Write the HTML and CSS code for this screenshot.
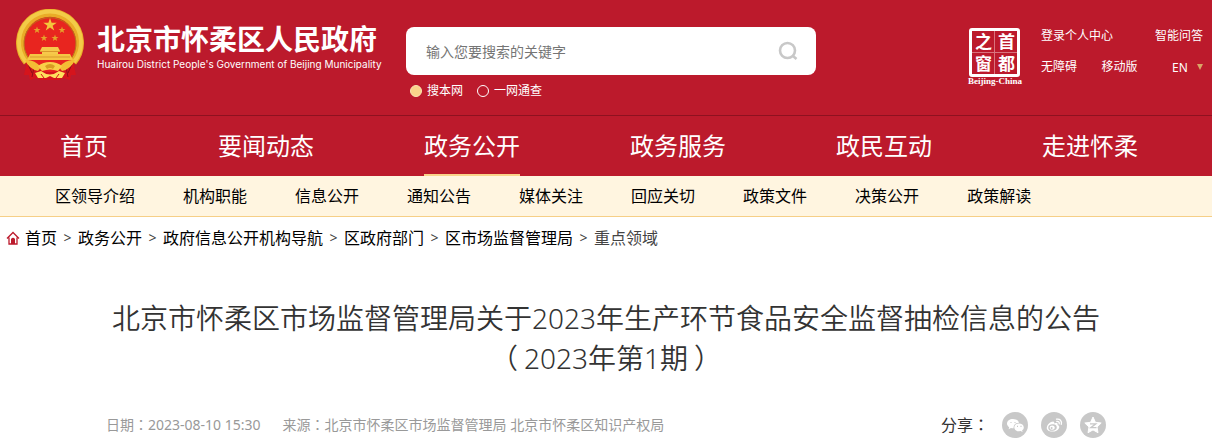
FILE: index.html
```html
<!DOCTYPE html>
<html lang="zh-CN">
<head>
    <meta charset="UTF-8">
    <meta name="viewport" content="width=device-width, initial-scale=1.0">
    <title>北京市怀柔区人民政府</title>
    <link rel="stylesheet" href="styles.css">
</head>
<body>
    <header class="header">
        <a class="logo" href="#">
            <svg class="emblem" viewBox="0 0 68 72" aria-hidden="true">
                <path d="M9 47 L10 57 L8 66 L13 66 L14 71 L21 69 L25 71 L43 71 L47 69 L54 71 L55 66 L60 66 L58 57 L59 47 Z" fill="#d5141c"/>
                <path d="M12 55 L16 64 M18 58 L16 68 M56 55 L52 64 M50 58 L52 68" stroke="#8f0e18" stroke-width="1" fill="none"/>
                <circle cx="34" cy="34" r="29" fill="#e8251f"/>
                <path d="M11 53 A30 30 0 1 1 57 53" fill="none" stroke="#e9ac27" stroke-width="8"/>
                <path d="M10 53 A31 31 0 1 1 58 53" fill="none" stroke="#f3cb48" stroke-width="4"/>
                <path d="M13 50 A26 26 0 1 1 55 50" fill="none" stroke="#b9731a" stroke-width="1"/>
                <path d="M34 9 L35.600 13.800 H40.700 L36.600 16.800 L38.200 21.600 L34 18.600 L29.800 21.600 L31.400 16.800 L27.300 13.800 H32.400 Z" fill="#f3c63c"/>
                <path id="star" d="M21 17.500 L21.900 20 H24.500 L22.400 21.500 L23.200 24 L21 22.500 L18.800 24 L19.600 21.500 L17.500 20 H20.100 Z" fill="#e5a12b"/>
                <use href="#star" x="25"/>
                <use href="#star" x="7" y="8"/>
                <use href="#star" x="18" y="8"/>
                <path d="M26 38 H42 L44 42 H24 Z M26 42 H42 V45 H26 Z" fill="#f6c94b"/>
                <path d="M14 45 H54 L57 51 H11 Z" fill="#f5c644"/>
                <path d="M24 42.500 H44 M14 48 H54" stroke="#d9992c" stroke-width="1"/>
                <path d="M9 51 Q18 50 25 58 L22 62 Q13 60 9 51 Z M59 51 Q50 50 43 58 L46 62 Q55 60 59 51 Z" fill="#f4bd35"/>
                <path d="M22 57 Q27 53 34 53 Q41 53 46 57 L42 62 Q34 59 26 62 Z" fill="#f8cf48"/>
                <path d="M29 57 Q34 53 39 57 L37 60 Q34 58 31 60 Z" fill="#d89b22"/>
                <path d="M19 64 L25 62 Q34 69 43 62 L49 64 L46 69 H38 L34 67 L30 69 H22 Z" fill="#ffe05d"/>
                <path d="M25 65 L28 69 M43 65 L40 69" stroke="#d5141c" stroke-width="1"/>
            </svg>
            <span class="site">
                <span class="name">北京市怀柔区人民政府</span>
                <span class="name-en">Huairou District People's Government of Beijing Municipality</span>
            </span>
        </a>
        <form class="search">
            <div class="search-box">
                <input type="text" placeholder="输入您要搜索的关键字" aria-label="搜索">
                <button type="button" aria-label="搜索">
                    <svg viewBox="0 0 20 20" width="20" height="20" fill="none" stroke="#c8c8c8" stroke-width="2.600">
                        <circle cx="9.500" cy="9.500" r="7.500"/>
                        <path d="M15 15 L18.500 18"/>
                    </svg>
                </button>
            </div>
            <div class="scope">
                <label><input type="radio" name="scope" checked>搜本网</label>
                <label><input type="radio" name="scope">一网通查</label>
            </div>
        </form>
        <div class="tools">
            <a class="capital" href="#">
                <span class="seal"><i>之</i><i>首</i><i>窗</i><i>都</i></span>
                <span class="seal-name">Beijing-China</span>
            </a>
            <div class="links">
                <div class="links-row">
                    <a href="#">登录个人中心</a>
                    <a href="#">智能问答</a>
                </div>
                <div class="links-row">
                    <a href="#">无障碍</a>
                    <a href="#">移动版</a>
                    <span class="lang">
                        <select aria-label="Language"><option>EN</option></select>
                        <svg viewBox="0 0 6 6" width="6" height="6" aria-hidden="true"><path d="M0 0 H6 L3 6 Z" fill="#d9a566"/></svg>
                    </span>
                </div>
            </div>
        </div>
    </header>

    <nav class="nav">
        <a href="#">首页</a>
        <a href="#">要闻动态</a>
        <a class="active" href="#">政务公开</a>
        <a href="#">政务服务</a>
        <a href="#">政民互动</a>
        <a href="#">走进怀柔</a>
    </nav>
    <nav class="subnav">
        <a href="#">区领导介绍</a>
        <a href="#">机构职能</a>
        <a href="#">信息公开</a>
        <a href="#">通知公告</a>
        <a href="#">媒体关注</a>
        <a href="#">回应关切</a>
        <a href="#">政策文件</a>
        <a href="#">决策公开</a>
        <a href="#">政策解读</a>
    </nav>

    <div class="crumbs">
        <svg viewBox="0 0 14 14" width="14" height="14" aria-hidden="true">
            <path d="M1 7.500 L7 1.500 L13 7.500 M3 6.500 V13 H11 V6.500" fill="none" stroke="#bc1a2c" stroke-width="1.300"/>
            <path d="M5 13 V8 Q7 5.500 9 8 V13 Z" fill="#bc1a2c"/>
        </svg>
        <a href="#">首页</a><span>&gt;</span>
        <a href="#">政务公开</a><span>&gt;</span>
        <a href="#">政府信息公开机构导航</a><span>&gt;</span>
        <a href="#">区政府部门</a><span>&gt;</span>
        <a href="#">区市场监督管理局</a><span>&gt;</span>
        <a class="current" href="#">重点领域</a>
    </div>

    <main class="article">
        <h1>北京市怀柔区市场监督管理局关于2023年生产环节食品安全监督抽检信息的公告<br>（<span class="issue">2023年第1期</span>）</h1>
        <div class="meta">
            <span>日期<b class="colon" lang="zh-TW">：</b>2023-08-10 15:30</span>
            <span>来源<b class="colon" lang="zh-TW">：</b>北京市怀柔区市场监督管理局 北京市怀柔区知识产权局</span>
            <div class="share">
                <span>分享<b class="colon" lang="zh-TW">：</b></span>
                <a href="#" aria-label="微信">
                    <svg viewBox="0 0 26 26" width="26" height="26">
                        <circle cx="13" cy="13" r="13" fill="#c8c8c8"/>
                        <path d="M11 7 C7.500 7 5 9 5 11.600 C5 13.200 5.900 14.400 7.200 15.200 L6.600 17.200 L9 16 C9.900 16.300 11 16.300 11.600 16.200 C11.200 13 14 10.700 17 10.700 C16.500 8.500 14 7 11 7 Z" fill="#fff"/>
                        <path d="M17 11.500 C14.300 11.500 12.300 13.300 12.300 15.400 C12.300 17.600 14.400 19.300 17 19.300 L18.700 19 L20.600 20 L20.100 18.300 C21.200 17.600 21.800 16.600 21.800 15.400 C21.800 13.200 19.600 11.500 17 11.500 Z" fill="#fff"/>
                        <path d="M8.500 10.500 h1 M12.500 10.500 h1 M15 14.300 h1 M18.500 14.300 h1" stroke="#c8c8c8" stroke-width="1.200"/>
                    </svg>
                </a>
                <a href="#" aria-label="微博">
                    <svg viewBox="0 0 26 26" width="26" height="26">
                        <circle cx="13" cy="13" r="13" fill="#c8c8c8"/>
                        <path d="M10 10 C12.200 8.800 13.800 9.400 13.200 11.400 C15.500 10.600 17.300 11.200 16.600 13 C18.200 13.500 18.700 14.700 18 16.200 C16.800 18.600 14 19.800 11 19.600 C7.800 19.400 5.500 17.900 5.800 15.400 C6 13.300 8 11.200 10 10 Z" fill="#fff"/>
                        <ellipse cx="11.500" cy="15.500" rx="4.300" ry="3.200" transform="rotate(-10 11.500 15.500)" fill="#c8c8c8"/>
                        <ellipse cx="11.200" cy="15.700" rx="2.600" ry="2.100" fill="#fff"/>
                        <circle cx="10.600" cy="16" r="1" fill="#c8c8c8"/>
                        <path d="M15.500 7.200 C18.800 6.400 21.200 9 20.300 12.300 M15.800 9.500 C17.600 9.200 18.600 10.300 18.200 11.800" fill="none" stroke="#fff" stroke-width="1.300" stroke-linecap="round"/>
                    </svg>
                </a>
                <a href="#" aria-label="QQ空间">
                    <svg viewBox="0 0 26 26" width="26" height="26">
                        <circle cx="13" cy="13" r="13" fill="#c8c8c8"/>
                        <path d="M13 5 L15.400 10.300 L21.200 11 L17 15 L18 20.700 L13 17.900 L8 20.700 L9 15 L4.800 11 L10.600 10.300 Z" fill="#fff" stroke="#fff" stroke-linejoin="round"/>
                        <path d="M10 11.800 H15.800 L10.800 15.700 H16.500" fill="none" stroke="#c8c8c8" stroke-width="1.300"/>
                    </svg>
                </a>
            </div>
        </div>
    </main>
</body>
</html>
```
FILE: styles.css
```css
body{
    margin: 0;
    background: #fff;
    color: #000;
    font-family: "Noto Sans", "Noto Sans CJK SC", sans-serif;
    font-size: 16px;
}
a{
    color: inherit;
    text-decoration: none;
}
svg{
    display: block;
}
.header{
    display: flex;
    align-items: flex-start;
    height: 115px;
    padding: 0 9px 0 16px;
    background: #bc1a2c;
    color: #fff;
}
.logo{
    display: flex;
    gap: 13px;
    padding-top: 9px;
}
.emblem{
    width: 68px;
    height: 72px;
}
.site{
    display: flex;
    flex-direction: column;
    width: 284px;
    padding-top: 14px;
    white-space: nowrap;
}
.name{
    font-size: 28px;
    font-weight: bold;
    line-height: 32px;
}
.name-en{
    font-family: Inter, sans-serif;
    font-size: 10px;
    line-height: 18px;
}
.search{
    width: 410px;
    margin-left: 25px;
    padding-top: 27px;
}
.search-box{
    display: flex;
    align-items: center;
    height: 48px;
    padding: 0 18px 0 20px;
    box-sizing: border-box;
    background: #fff;
    border-radius: 8px;
}
.search-box input{
    flex: 1;
    min-width: 0;
    padding: 0;
    border: 0;
    outline: 0;
    background: none;
    font: 14px "Noto Sans", "Noto Sans CJK SC", sans-serif;
}
.search-box input::placeholder{
    color: #757575;
}
.search-box button{
    padding: 0;
    border: 0;
    background: none;
}
.scope{
    display: flex;
    gap: 14px;
    padding: 6px 4px;
    font-size: 12px;
    line-height: 20px;
}
.scope label{
    display: flex;
    align-items: center;
    gap: 5px;
}
.scope input{
    appearance: none;
    width: 12px;
    height: 12px;
    margin: 0;
    border: 1px solid #fff;
    border-radius: 50%;
}
.scope input:checked{
    background: #fad38a;
    border-color: #fce3b4;
}
.tools{
    display: flex;
    gap: 19px;
    margin-left: auto;
    padding-top: 26px;
    font-size: 12px;
}
.capital{
    display: flex;
    flex-direction: column;
    align-items: center;
    padding-top: 2px;
}
.seal{
    display: grid;
    grid-template-columns: 22px 22px;
    grid-template-rows: 21px 21px;
    gap: 1px;
    border: 3px solid #fff;
    border-radius: 3px;
    background: #d9737d;
}
.seal i{
    background: #bc1a2c;
    font-family: "Noto Sans CJK SC", sans-serif;
    font-size: 17px;
    font-style: normal;
    font-weight: bold;
    line-height: 20px;
    text-align: center;
}
.seal-name{
    font-family: "Liberation Serif", serif;
    font-size: 9px;
    font-weight: bold;
    line-height: 8px;
}
.links{
    display: flex;
    flex-direction: column;
    gap: 11px;
    width: 162px;
}
.links-row{
    display: flex;
    justify-content: space-between;
    line-height: 20px;
}
.lang{
    display: flex;
    align-items: center;
    gap: 9px;
    padding-left: 10px;
}
.lang select{
    appearance: none;
    padding: 0;
    border: 0;
    background: none;
    color: #fff;
    font: 12px "Noto Sans", sans-serif;
}
.nav{
    display: flex;
    gap: 110px;
    padding-left: 60px;
    border-top: 1px solid #8e1120;
    background: #bc1a2c;
    color: #fff;
    font-size: 24px;
    line-height: 60px;
    white-space: nowrap;
}
.nav .active{
    box-shadow: inset 0 -2px #fad38a;
}
.subnav{
    display: flex;
    gap: 48px;
    padding-left: 55px;
    border-bottom: 1px solid #f6cf87;
    background: #fff5e0;
    line-height: 40px;
    white-space: nowrap;
}
.crumbs{
    display: flex;
    align-items: center;
    padding: 0 6px;
    line-height: 42px;
    white-space: nowrap;
}
.crumbs svg{
    margin-right: 5px;
}
.crumbs span{
    width: 21px;
    color: #444;
    font-size: 14px;
    text-align: center;
}
.crumbs .current{
    color: #444;
}
.article{
    padding: 39px 106px 0;
}
h1{
    margin: 0;
    color: #333;
    font-size: 28px;
    font-weight: 350;
    line-height: 40px;
    text-align: center;
}
.issue{
    margin: 0 6px;
}
.meta{
    display: flex;
    gap: 22px;
    margin-top: 34px;
    color: #999;
    font-size: 14px;
    line-height: 24px;
}
.colon{
    font-family: "Noto Sans CJK TC", sans-serif;
    font-weight: normal;
}
.share{
    display: flex;
    gap: 13px;
    margin-left: auto;
    color: #333;
    font-size: 16px;
}
```
